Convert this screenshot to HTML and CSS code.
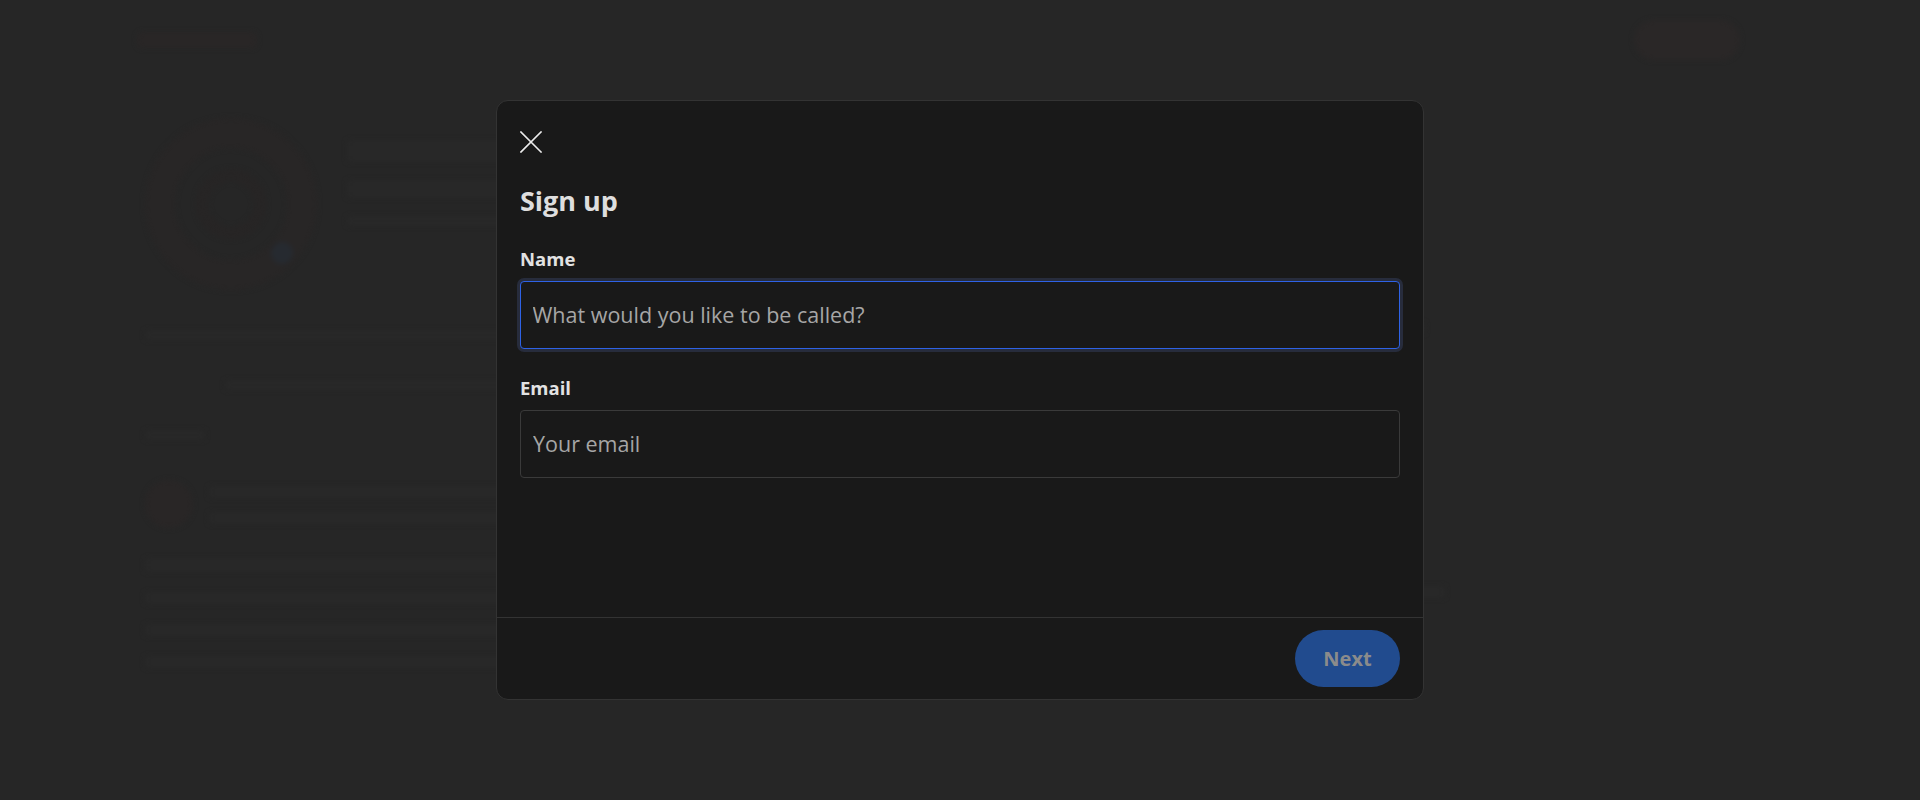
FILE: index.html
```html
<!DOCTYPE html>
<html lang="en">
<head>
<meta charset="utf-8">
<title>Sign up</title>
<link rel="stylesheet" href="styles.css">
</head>
<body>
<div class="page" aria-hidden="true">
  <header class="page-head">
    <div class="logo-blob"></div>
    <div class="pill-blob"></div>
  </header>
  <div class="page-cols">
    <main class="page-main">
      <div class="profile">
        <div class="avatar"><div class="avatar-core"></div><div class="avatar-dot"></div></div>
        <div class="profile-lines">
          <div class="ln w160 h22"></div>
          <div class="ln w220 h18"></div>
          <div class="ln w180 h10"></div>
        </div>
      </div>
      <div class="ln w620 h10 mt40"></div>
      <div class="ln w480 h10 mt40 ml80"></div>
      <div class="ln w60 h10 mt40"></div>
      <div class="post">
        <div class="post-ico"></div>
        <div class="post-lines"><div class="ln w520 h12"></div><div class="ln w360 h12"></div></div>
      </div>
      <div class="ln w660 h14 mt30"></div>
      <div class="ln w700 h12 mt20"></div>
      <div class="ln w680 h12 mt20"></div>
      <div class="ln w740 h12 mt20"></div>
    </main>
    <aside class="page-side">
      <div class="ln w180 h12"></div>
      <div class="ln w240 h12"></div>
      <div class="ln w120 h12"></div>
      <div class="ln w200 h12"></div>
      <div class="ln w160 h12"></div>
      <div class="ln w220 h12"></div>
      <div class="ln w140 h12"></div>
      <div class="ln w260 h12"></div>
    </aside>
  </div>
</div>

<div class="overlay">
  <div class="modal" role="dialog" aria-labelledby="title">
    <div class="modal-body">
      <button class="close" type="button" aria-label="Close">
        <svg width="22" height="22" viewBox="0 0 22 22" fill="none" stroke="currentColor" stroke-width="1.6" stroke-linecap="square"><path d="M1 1L21 21M21 1L1 21"/></svg>
      </button>
      <h2 class="title" id="title">Sign up</h2>
      <label class="label" for="name">Name</label>
      <input class="input focused" id="name" type="text" placeholder="What would you like to be called?">
      <label class="label label-gap" for="email">Email</label>
      <input class="input" id="email" type="email" placeholder="Your email">
    </div>
    <div class="modal-foot">
      <button class="next" type="button" disabled>Next</button>
    </div>
  </div>
</div>
</body>
</html>
```

FILE: styles.css
```css
* { box-sizing: border-box; }
html, body { margin: 0; height: 100%; }
body {
  background: #262626;
  font-family: "Open Sans", "Noto Sans", sans-serif;
  overflow: hidden;
}

/* faint background page */
.page {
  filter: blur(2.5px);
  padding: 18px 130px 0 145px;
}
.page-head {
  display: flex;
  justify-content: space-between;
  align-items: center;
  height: 44px;
  padding-right: 50px;
}
.logo-blob { width: 120px; height: 16px; border-radius: 6px; background: #292626; margin-left: -8px; }
.pill-blob { width: 106px; height: 40px; border-radius: 20px; background: #2a2727; }
.page-cols { display: flex; gap: 280px; margin-top: 56px; }
.page-main { width: 760px; display: flex; flex-direction: column; }
.page-side { display: flex; flex-direction: column; gap: 32px; padding-top: 160px; }
.profile { display: flex; gap: 30px; align-items: flex-start; }
.avatar {
  width: 172px; height: 172px; border-radius: 50%;
  border: 30px solid #282626;
  display: flex; align-items: center; justify-content: center;
  position: relative;
}
.avatar-core { width: 70px; height: 70px; border-radius: 50%; border: 12px solid #272525; }
.avatar-dot { position: absolute; right: -6px; bottom: -4px; width: 22px; height: 22px; border-radius: 50%; background: #262a30; }
.profile-lines { display: flex; flex-direction: column; gap: 18px; padding-top: 22px; }
.post { display: flex; gap: 16px; margin-top: 40px; }
.post-ico { width: 48px; height: 48px; border-radius: 50%; background: #292626; }
.post-lines { display: flex; flex-direction: column; gap: 14px; padding-top: 6px; }
.ln { background: #282828; border-radius: 4px; }
.w60 { width: 60px; } .w120 { width: 120px; } .w140 { width: 140px; } .w160 { width: 160px; }
.w180 { width: 180px; } .w200 { width: 200px; } .w220 { width: 220px; } .w240 { width: 240px; }
.w260 { width: 260px; } .w360 { width: 360px; } .w480 { width: 480px; } .w520 { width: 520px; }
.w620 { width: 620px; } .w660 { width: 660px; } .w680 { width: 680px; } .w700 { width: 700px; } .w740 { width: 740px; }
.h10 { height: 10px; } .h12 { height: 12px; } .h14 { height: 14px; } .h18 { height: 18px; } .h22 { height: 22px; }
.mt20 { margin-top: 20px; } .mt30 { margin-top: 30px; } .mt40 { margin-top: 40px; } .ml80 { margin-left: 80px; }

/* overlay + modal */
.overlay {
  position: fixed;
  inset: 0;
  display: flex;
  align-items: center;
  justify-content: center;
}
.modal {
  width: 928px;
  height: 600px;
  background: #191919;
  border: 1px solid #333333;
  border-radius: 12px;
  display: flex;
  flex-direction: column;
  overflow: hidden;
}
.modal-body {
  flex: 1;
  display: flex;
  flex-direction: column;
  align-items: flex-start;
  padding: 30px 23px 0 23px;
}
.close {
  background: none;
  border: 0;
  padding: 0;
  width: 22px;
  height: 22px;
  color: #ececec;
  cursor: pointer;
  display: block;
}
.close svg { display: block; }
.title {
  margin: 30px 0 0 0;
  font-size: 27px;
  line-height: 36px;
  font-weight: 700;
  color: #dedede;
}
.label {
  display: block;
  margin-top: 28px;
  font-size: 18.5px;
  line-height: 24px;
  font-weight: 700;
  color: #e2e2e2;
}
.label-gap { margin-top: 27px; }
.input {
  display: block;
  width: 100%;
  height: 68px;
  margin-top: 10px;
  padding: 0 12px 2px 12px;
  background: #191919;
  border: 1px solid #3a3a3a;
  border-radius: 4px;
  color: #e0e0e0;
  font-family: inherit;
  font-size: 21.5px;
  outline: none;
}
.input::placeholder { color: #a6a6a6; opacity: 1; }
.input.focused {
  border: 1.5px solid #2e62e6;
  box-shadow: 0 0 0 3px #272c3c;
  padding-left: 11.5px;
}
.modal-foot {
  border-top: 1px solid #333333;
  padding: 12px 23px;
  display: flex;
  justify-content: flex-end;
}
.next {
  width: 105px;
  height: 57px;
  border: 0;
  border-radius: 29px;
  background: #214b8e;
  color: #8b8b8b;
  font-family: inherit;
  font-size: 20px;
  font-weight: 700;
  cursor: default;
}
```
